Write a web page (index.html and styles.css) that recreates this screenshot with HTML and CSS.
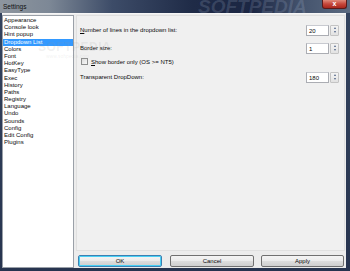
FILE: index.html
```html
<!DOCTYPE html>
<html lang="en">
<head>
  <meta charset="UTF-8" />
  <title>Settings</title>
  <link rel="stylesheet" href="styles.css">
</head>
<body>
  <div class="window">
    <div class="titlebar">
      <span class="title">Settings</span>
      <span class="mark">SOFTPEDIA</span>
      <div class="close">x</div>
    </div>

    <div class="client">
      <ul class="pages">
        <li>Appearance</li>
        <li>Console look</li>
        <li>Hint popup</li>
        <li class="selected">Dropdown List</li>
        <li>Colors</li>
        <li>Font</li>
        <li>HotKey</li>
        <li>EasyType</li>
        <li>Exec</li>
        <li>History</li>
        <li>Paths</li>
        <li>Registry</li>
        <li>Language</li>
        <li>Undo</li>
        <li>Sounds</li>
        <li>Config</li>
        <li>Edit Config</li>
        <li>Plugins</li>
      </ul>

      <div class="main">
        <div class="panel">
          <div class="row">
            <span><u>N</u>umber of lines in the dropdown list:</span>
            <div class="spin"><span class="value">20</span><span class="arrows"><i class="up"></i><i class="down"></i></span></div>
          </div>
          <div class="row">
            <span>Border size:</span>
            <div class="spin"><span class="value">1</span><span class="arrows"><i class="up"></i><i class="down"></i></span></div>
          </div>
          <div class="row check">
            <span class="box"></span>
            <span><u>S</u>how border only (OS &gt;= NT5)</span>
          </div>
          <div class="row">
            <span>Transparent DropDown:</span>
            <div class="spin"><span class="value">180</span><span class="arrows"><i class="up"></i><i class="down"></i></span></div>
          </div>
        </div>

        <div class="buttons">
          <button class="default">OK</button>
          <button>Cancel</button>
          <button class="last">Apply</button>
        </div>
      </div>

      <div class="watermark">SOFTPEDIA<small>www.softpedia.com</small></div>
    </div>
  </div>
</body>
</html>
```

FILE: styles.css
```css
body {
  margin: 0;
  font-family: "Liberation Sans", Arial, sans-serif;
  font-size: 6px;
  color: #0a0a0a;
}
.window {
  width: 350px;
  height: 271px;
  display: flex;
  flex-direction: column;
  background: linear-gradient(to bottom, #34445f, #27344f);
}
.titlebar {
  position: relative;
  height: 13px;
  overflow: hidden;
  background: linear-gradient(to right, #8d959e 0, #7d8896 14%, #3d4c68 32%, #1f2b47 55%, #1b2643 72%, #44536d 86%, #5b6a80 100%);
}
.title {
  position: absolute;
  left: 3px;
  top: 3px;
  font-size: 6.5px;
  color: #111;
}
.mark {
  position: absolute;
  left: 198px;
  top: -4px;
  font-size: 19px;
  font-weight: bold;
  font-style: italic;
  color: rgba(200, 215, 240, 0.16);
}
.close {
  position: absolute;
  left: 322px;
  top: 0;
  width: 23px;
  height: 8px;
  border: 1px solid #5a1a1a;
  border-top: 0;
  border-radius: 0 0 3px 3px;
  background: linear-gradient(to bottom, #e08a7a, #c6463a 50%, #a7271d);
  color: #fff;
  font-size: 7px;
  font-weight: bold;
  line-height: 7px;
  text-align: center;
}
.client {
  position: relative;
  flex: 1;
  display: flex;
  margin: 0 4px 3px 2px;
  padding-top: 1px;
  background: #ececec;
  border-top: 1px solid #f6f6f6;
}
.pages {
  list-style: none;
  margin: 0;
  padding: 1px 0 0;
  width: 70px;
  background: #fff;
  border: 1px solid #9aa0a8;
}
.pages li {
  height: 7.2px;
  line-height: 7.2px;
  padding-left: 1px;
  white-space: nowrap;
}
.pages li.selected {
  background: #3399ff;
  color: #fff;
}
.main {
  flex: 1;
  display: flex;
  flex-direction: column;
}
.panel {
  flex: 1;
  margin: 0 1px 0 2px;
  padding: 8px 5px 0 3px;
  background: #f0f0f0;
  border: 1px solid #e0e0e0;
}
.row {
  display: flex;
  align-items: center;
  justify-content: space-between;
  height: 12px;
  margin-top: 6px;
}
.row:first-child {
  margin-top: 0;
}
.row.check {
  justify-content: flex-start;
  height: 7px;
  margin-top: 4px;
}
.row.check + .row {
  margin-top: 6px;
}
.box {
  width: 5px;
  height: 5px;
  margin: 0 3px 0 1px;
  border: 1px solid #8e8f8f;
  background: linear-gradient(to bottom right, #dcdcdc, #f8f8f8);
}
.spin {
  display: flex;
  gap: 1px;
  height: 11px;
}
.value {
  width: 19px;
  padding-left: 2px;
  line-height: 10px;
  background: #fff;
  border: 1px solid #abadb3;
  border-top-color: #c8cad0;
}
.arrows {
  display: flex;
  flex-direction: column;
  justify-content: space-around;
  align-items: center;
  width: 7px;
  background: linear-gradient(to bottom, #f4f4f4, #e2e2e2);
  border: 1px solid #c4c4c4;
  border-radius: 1px;
}
.arrows i {
  width: 0;
  height: 0;
  border-left: 1.5px solid transparent;
  border-right: 1.5px solid transparent;
}
.arrows .up {
  border-bottom: 2px solid #4d6185;
}
.arrows .down {
  border-top: 2px solid #4d6185;
}
.buttons {
  display: flex;
  gap: 8px;
  padding: 4px 0 1px 4px;
}
button {
  width: 84px;
  height: 12px;
  padding: 0;
  font-family: inherit;
  font-size: 6px;
  color: #0a0a0a;
  border: 1px solid #707070;
  border-radius: 2px;
  background: linear-gradient(to bottom, #f4f4f4 0, #ebebeb 48%, #dddddd 52%, #cfcfcf 100%);
}
button.default {
  border-color: #3c7fb1;
  box-shadow: inset 0 0 0 1px #48d0f5;
}
button.last {
  width: 83px;
  margin-left: -1px;
}
.watermark {
  position: absolute;
  left: 36px;
  top: 27px;
  font-size: 12px;
  font-weight: bold;
  letter-spacing: 0.5px;
  color: rgba(150, 150, 150, 0.14);
  line-height: 12px;
}
.watermark small {
  display: block;
  margin-left: 8px;
  font-size: 5px;
  font-weight: normal;
  line-height: 6px;
  letter-spacing: 0;
}
```
